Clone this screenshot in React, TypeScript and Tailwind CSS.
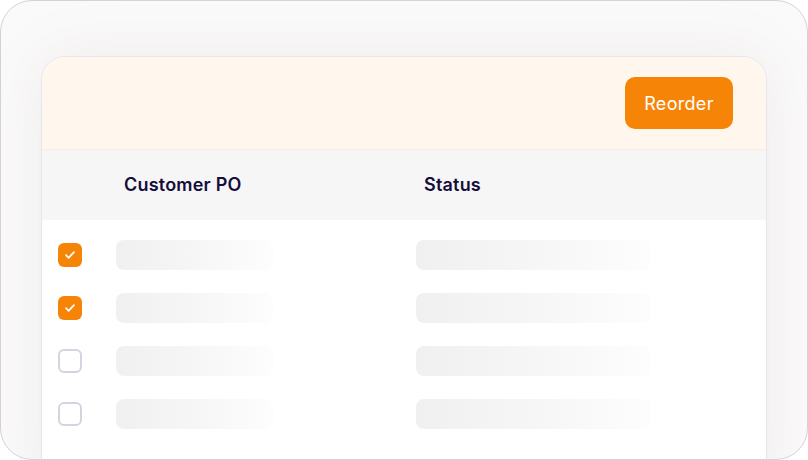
const rows = [true, true, false, false]

function Check({ checked }: { checked: boolean }) {
  if (checked) {
    return (
      <div className="flex h-6 w-6 items-center justify-center rounded-[6px] bg-[#f68507]">
        <svg className="h-[14px] w-[14px] text-white" viewBox="0 0 12 12" fill="none" stroke="currentColor">
          <path d="M2.6 6.2l2.2 2.2 4.6-4.8" strokeWidth={1.5} strokeLinecap="round" strokeLinejoin="round" />
        </svg>
      </div>
    )
  }
  return <div className="h-6 w-6 rounded-[6px] border-2 border-[#d6d3de] bg-white" />
}

export default function App() {
  return (
    <div className="h-[460px] w-[808px] overflow-hidden rounded-[32px] border border-[#d5d1dc] bg-[#fbfafa] px-[40px] pt-[55px] font-['Inter',sans-serif]">
      <div className="h-[440px] overflow-hidden rounded-t-[24px] border border-[#e6e5ea] bg-white shadow-[0_0_60px_rgba(120,110,100,0.10)]">
        <div className="flex h-[93px] items-center justify-end border-b border-[#fcebdc] bg-[#fff6ee] pr-[33px]">
          <button className="h-[52px] w-[108px] rounded-[10px] bg-[#f68507] text-[18px] tracking-[0.3px] text-white">Reorder</button>
        </div>
        <div className="flex h-[70px] items-center bg-[#f6f6f6] pb-[2px] text-[18px] font-semibold tracking-[0.2px] text-[#150d3b]">
          <div className="w-[82px]" />
          <div className="w-[300px]">Customer PO</div>
          <div>Status</div>
        </div>
        <div className="flex flex-col gap-[23px] pt-[20px]">
          {rows.map((c, i) => (
            <div key={i} className="flex h-[30px] items-center">
              <div className="w-[74px] pl-[16px]">
                <Check checked={c} />
              </div>
              <div className="w-[300px]">
                <div className="h-[30px] w-[157px] rounded-[8px] bg-gradient-to-r from-[#f0f0f1] via-[#f6f6f6] to-[#fdfdfd]" />
              </div>
              <div className="h-[30px] w-[235px] rounded-[8px] bg-gradient-to-r from-[#f0f0f1] via-[#f6f6f6] to-[#fdfdfd]" />
            </div>
          ))}
        </div>
      </div>
    </div>
  )
}
